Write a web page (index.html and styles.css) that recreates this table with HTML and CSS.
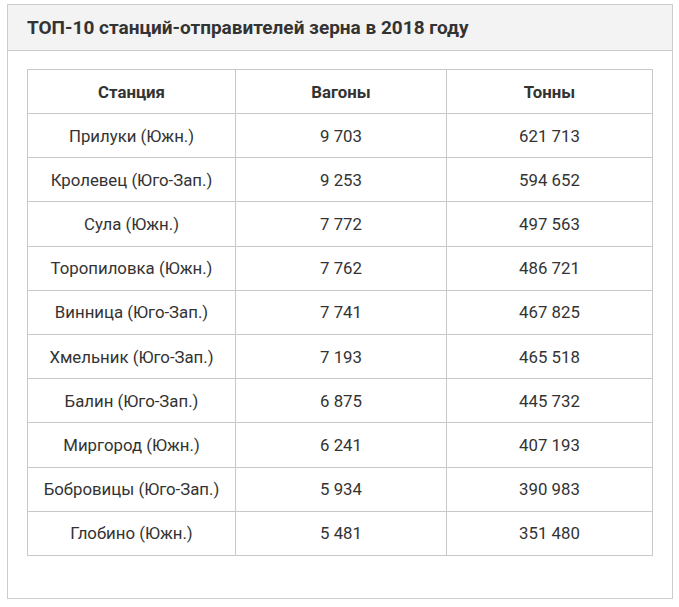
FILE: index.html
```html
<!DOCTYPE html>
<html lang="ru">
<head>
<meta charset="utf-8">
<link rel="stylesheet" href="styles.css">
</head>
<body>
<div class="box">
  <div class="box-head">ТОП-10 станций-отправителей зерна в 2018 году</div>
  <div class="box-body">
    <table class="tbl">
      <thead>
        <tr><th>Станция</th><th>Вагоны</th><th>Тонны</th></tr>
      </thead>
      <tbody>
        <tr><td>Прилуки (Южн.)</td><td>9 703</td><td>621 713</td></tr>
        <tr><td>Кролевец (Юго-Зап.)</td><td>9 253</td><td>594 652</td></tr>
        <tr><td>Сула (Южн.)</td><td>7 772</td><td>497 563</td></tr>
        <tr><td>Торопиловка (Южн.)</td><td>7 762</td><td>486 721</td></tr>
        <tr><td>Винница (Юго-Зап.)</td><td>7 741</td><td>467 825</td></tr>
        <tr><td>Хмельник (Юго-Зап.)</td><td>7 193</td><td>465 518</td></tr>
        <tr><td>Балин (Юго-Зап.)</td><td>6 875</td><td>445 732</td></tr>
        <tr><td>Миргород (Южн.)</td><td>6 241</td><td>407 193</td></tr>
        <tr><td>Бобровицы (Юго-Зап.)</td><td>5 934</td><td>390 983</td></tr>
        <tr><td>Глобино (Южн.)</td><td>5 481</td><td>351 480</td></tr>
      </tbody>
    </table>
  </div>
</div>
</body>
</html>
```
FILE: styles.css
```css
html, body {
  margin: 0;
  padding: 0;
  background: #fff;
}
body {
  padding: 4px 6px 0 7px;
  font-family: Roboto, "Liberation Sans", Arial, sans-serif;
  color: #333;
}
.box {
  border: 1px solid #cccccc;
  width: 664px;
}
.box-head {
  background: #f3f3f3;
  border-bottom: 1px solid #cccccc;
  height: 45px;
  line-height: 45px;
  padding-left: 19px;
  font-size: 19px;
  font-weight: 700;
  color: #333;
}
.box-body {
  padding: 18px 19px 42px 19px;
}
.tbl {
  border-collapse: collapse;
  width: 626px;
  table-layout: fixed;
}
.tbl th, .tbl td {
  border: 1px solid #c8c8c8;
  height: 43.2px;
  padding: 0;
  text-align: center;
  vertical-align: middle;
  font-size: 16.8px;
  color: #333;
}
.tbl th {
  height: 43px;
  font-weight: 700;
}
.tbl th:nth-child(1), .tbl td:nth-child(1) { width: 207px; }
.tbl th:nth-child(2), .tbl td:nth-child(2) { width: 210px; }
```
